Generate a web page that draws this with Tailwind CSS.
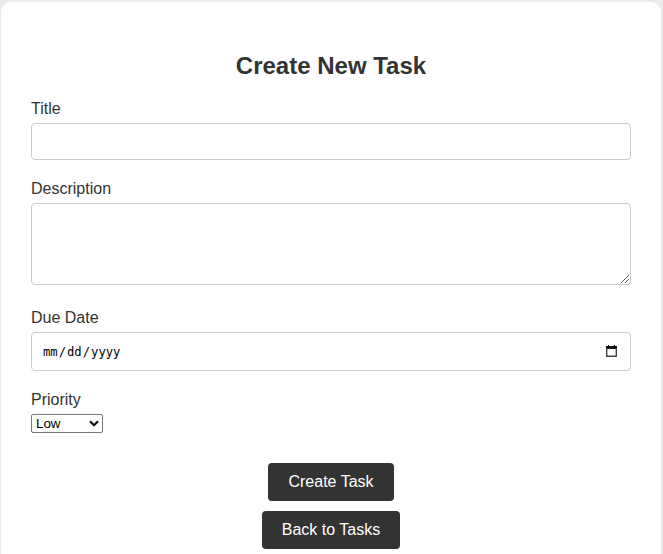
<!DOCTYPE html>
<html lang="en">
<head>
<meta charset="utf-8">
<title>Create New Task</title>
<script src="https://cdn.jsdelivr.net/npm/@tailwindcss/browser@4"></script>
</head>
<body class="h-[554px] overflow-hidden bg-[#ebebeb] pt-[2px] pr-[2px] pl-px font-['Liberation_Sans',Arial,sans-serif] text-base leading-[18px] text-[#333]">
<main class="h-[552px] rounded-t-[10px] bg-white px-[30px] pt-[50px]">
  <h2 class="text-center text-2xl leading-7 font-bold">Create New Task</h2>
  <form class="mt-[20px] flex flex-col">
    <label for="title" class="h-[18px]">Title</label>
    <input id="title" type="text" class="mt-[5px] h-[37px] rounded-[4px] border border-[#ccc] bg-white px-[10px]">
    <label for="description" class="mt-[20px] h-[18px]">Description</label>
    <div class="relative mt-[5px] h-[82px]">
      <textarea id="description" class="block size-full resize-none rounded-[4px] border border-[#ccc] bg-white p-[10px]"></textarea>
      <svg class="absolute right-[2px] bottom-[2px]" width="8" height="8" viewBox="0 0 8 8" fill="none" stroke="#444" stroke-width="0.9"><path d="M0 8l8-8M4 8l4-4"/></svg>
    </div>
    <label class="mt-[24px] h-[18px]">Due Date</label>
    <div class="mt-[5px] flex h-[39px] items-center justify-between rounded-[4px] border border-[#ccc] px-[11px] text-black">
      <div class="flex gap-px pt-[2px] font-['DejaVu_Sans_Mono',monospace] text-[12.2px] leading-[15px]"><span>mm</span><span>/</span><span>dd</span><span>/</span><span>yyyy</span></div>
      <svg class="mr-[2px] -mt-px" width="11" height="12" viewBox="0 0 11 12"><path fill="#111" d="M2 0h1v1h5V0h1v1h2v3H0V1h2z"/><path fill="none" stroke="#444" stroke-width="1.4" d="M.7 3v8.3h9.6V3"/></svg>
    </div>
    <label class="mt-[20px] h-[18px]">Priority</label>
    <div class="mt-[5px] flex h-[19px] w-[72px] items-center justify-between rounded-[2px] border border-[#767676] pr-[3px] pl-[4px] text-[13.333px] leading-[15px] text-black">
      <span>Low</span>
      <svg width="10" height="7" viewBox="0 0 10 7" fill="none" stroke="#111" stroke-width="2.2"><path d="M1 1.2l4 4 4-4"/></svg>
    </div>
    <div class="mt-[30px] flex flex-col items-center gap-[10px] text-white">
      <button type="button" class="h-[38px] w-[126px] rounded-[4px] bg-[#333]">Create Task</button>
      <button type="button" class="h-[38px] w-[138px] rounded-[4px] bg-[#333]">Back to Tasks</button>
    </div>
  </form>
</main>
</body>
</html>
